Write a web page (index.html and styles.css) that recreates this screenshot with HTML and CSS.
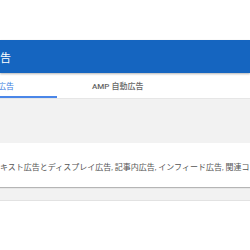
FILE: index.html
```html
<!DOCTYPE html>
<html lang="ja">
<head>
<meta charset="utf-8">
<link rel="stylesheet" href="styles.css">
</head>
<body>
<div class="page">
  <div class="top"></div>
  <header class="header"><span class="title">自動広告</span></header>
  <nav class="tabs">
    <div class="tab tab-active"><span class="tab-label">広告</span></div>
    <div class="tab tab-second"><span class="tab-label">AMP 自動広告</span></div>
  </nav>
  <div class="gap"></div>
  <section class="card">
    <p class="card-text">テキスト広告とディスプレイ広告, 記事内広告, インフィード広告, 関連コンテンツ</p>
  </section>
  <div class="gap-small"></div>
  <div class="bottom"></div>
</div>
</body>
</html>
```

FILE: styles.css
```css
html, body {
  margin: 0;
  padding: 0;
  background: #ffffff;
}
body {
  font-family: Roboto, "Noto Sans CJK JP", sans-serif;
  overflow: hidden;
  width: 250px;
  height: 250px;
}
.page {
  display: flex;
  flex-direction: column;
  width: 250px;
  height: 250px;
  overflow: hidden;
}
.top {
  height: 40px;
  flex: none;
  background: #ffffff;
}
.header {
  flex: none;
  height: 33px;
  background: #1565c0;
  box-shadow: 0 1px 2px rgba(0, 0, 0, 0.3);
  display: flex;
  align-items: center;
  position: relative;
  z-index: 2;
}
.title {
  color: #ffffff;
  font-size: 11px;
  margin-left: -33px;
  white-space: nowrap;
}
.tabs {
  flex: none;
  height: 26px;
  background: #ffffff;
  display: flex;
  border-bottom: 1px solid #e6e6e6;
  box-sizing: border-box;
}
.tab {
  display: flex;
  align-items: center;
  font-size: 8px;
  white-space: nowrap;
  box-sizing: border-box;
}
.tab-active {
  width: 57px;
  color: #3b7de0;
  border-bottom: 2px solid #4a86e8;
  padding-top: 2px;
}
.tab-active .tab-label {
  margin-left: -2px;
}
.tab-second {
  padding-left: 35px;
  color: #666666;
  font-weight: 500;
}
.gap {
  flex: none;
  height: 44px;
  background: #f2f2f2;
}
.card {
  flex: none;
  height: 44px;
  background: #ffffff;
  display: flex;
  align-items: center;
  box-shadow: 0 1px 1px rgba(0, 0, 0, 0.25);
  position: relative;
  z-index: 1;
}
.card-text {
  margin: 0 0 0 -8px;
  padding-top: 3px;
  font-size: 8px;
  color: #555555;
  white-space: nowrap;
}
.gap-small {
  flex: none;
  height: 13px;
  background: #f2f2f2;
  border-bottom: 1px solid #e2e2e2;
}
.bottom {
  flex: 1;
  background: #ffffff;
}
```
